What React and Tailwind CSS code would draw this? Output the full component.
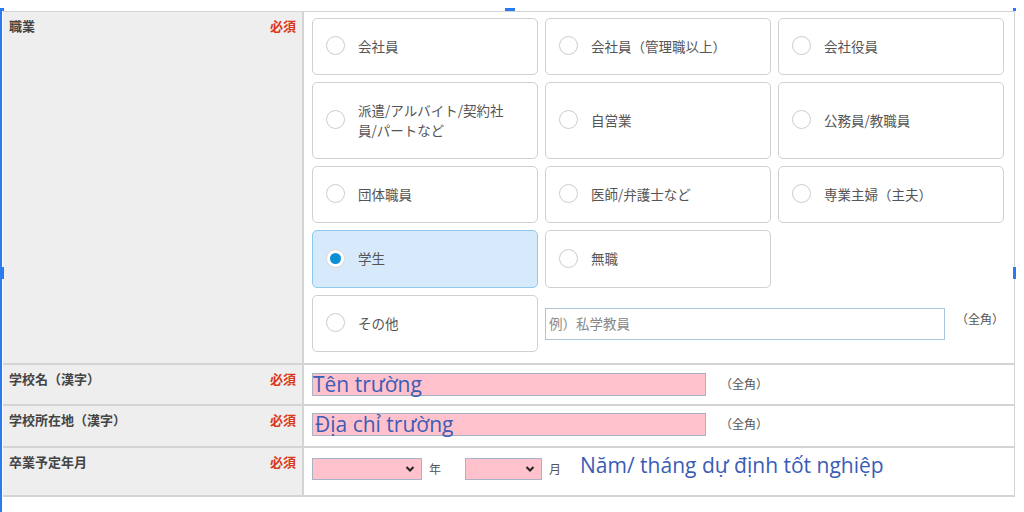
import React from "react";

const JP = { fontFamily: '"Noto Sans CJK JP", "Noto Sans", sans-serif' };
const VI = { fontFamily: '"Open Sans", "Noto Sans", sans-serif' };

function Radio({ checked }) {
  return (
    <span
      className={
        "flex h-[19px] w-[19px] shrink-0 items-center justify-center rounded-full border-[1.5px] bg-white " +
        (checked ? "border-[#d8d8d8]" : "border-[#cccccc]")
      }
    >
      {checked && <span className="h-[11px] w-[11px] rounded-full bg-[#0b8fd6]" />}
    </span>
  );
}

function Card({ label, h, checked }) {
  return (
    <div
      className={
        "flex items-center gap-[13px] rounded-[5px] border-[1.5px] pb-[2px] pl-[13px] pr-[10px] " +
        (checked ? "border-[#8fcaed] bg-[#d6eafc]" : "border-[#d0d0d0] bg-white")
      }
      style={{ height: h }}
    >
      <Radio checked={checked} />
      <span className="text-[13.5px] leading-[20px] text-[#555]" style={JP}>
        {label}
      </span>
    </div>
  );
}

function Chevron() {
  return (
    <svg width="10" height="8" viewBox="0 0 10 8" className="shrink-0">
      <path d="M1.5 2 L5 5.5 L8.5 2" fill="none" stroke="#222" strokeWidth="2" />
    </svg>
  );
}

function Select({ w }) {
  return (
    <div
      className="flex h-[22px] items-center justify-end border border-[#a9b3c6] bg-[#ffc2cc] pr-[6px]"
      style={{ width: w }}
    >
      <Chevron />
    </div>
  );
}

function LabelCell({ text, pt }) {
  return (
    <div
      className="flex justify-between border-r-2 border-[#d4d4d4] bg-[#eeeeee] pl-[6px] pr-[6px]"
      style={{ paddingTop: pt }}
    >
      <span className="text-[13px] font-bold leading-[18px] text-[#444]" style={JP}>
        {text}
      </span>
      <span className="text-[13px] font-bold leading-[18px] text-[#d8381c]" style={JP}>
        必須
      </span>
    </div>
  );
}

export default function App() {
  const h1 = 57;
  return (
    <div className="relative h-[512px] w-[1024px] overflow-hidden bg-white">
      {/* editor selection overlays */}
      <div className="absolute left-0 top-[9px] h-[503px] w-[2px] bg-[#2b7bf0]" />
      <div className="absolute left-0 top-[8px] h-[3px] w-[4px] bg-[#2b7bf0]" />
      <div className="absolute left-0 top-[267px] h-[12px] w-[4px] bg-[#2b7bf0]" />
      <div className="absolute left-[1013px] top-[267px] h-[12px] w-[3px] bg-[#2b7bf0]" />
      <div className="absolute left-[505px] top-[8px] h-[3px] w-[10px] bg-[#2b7bf0]" />
      <div className="absolute left-[1013px] top-[8px] h-[3px] w-[3px] bg-[#2b7bf0]" />

      <div className="ml-[3px] mt-[11px] w-[1012px] border-r border-t border-b-2 border-[#d4d4d4]">
        {/* Row 1 */}
        <div className="grid grid-cols-[301px_1fr] border-b-2 border-[#d4d4d4]">
          <LabelCell text="職業" pt={5} />
          <div className="pb-[11px] pl-[8px] pt-[6px]">
            <div className="grid grid-cols-[226px_226px_226px] gap-[7px]">
              <Card label="会社員" h={h1} />
              <Card label="会社員（管理職以上）" h={h1} />
              <Card label="会社役員" h={h1} />
              <Card
                label={
                  <>
                    派遣/アルバイト/契約社
                    <br />
                    員/パートなど
                  </>
                }
                h={77}
              />
              <Card label="自営業" h={77} />
              <Card label="公務員/教職員" h={77} />
              <Card label="団体職員" h={h1} />
              <Card label="医師/弁護士など" h={h1} />
              <Card label="専業主婦（主夫）" h={h1} />
              <Card label="学生" h={58} checked />
              <Card label="無職" h={58} />
              <div />
              <Card label="その他" h={h1} />
              <div className="col-span-2 flex items-center">
                <div className="flex h-[32px] w-[401px] items-center border border-[#a9c6dc] bg-white pl-[3px]">
                  <span className="text-[13.5px] text-[#888]" style={JP}>
                    例）私学教員
                  </span>
                </div>
                <span className="ml-[11px] -mt-[9px] text-[12px] text-[#555]" style={JP}>
                  （全角）
                </span>
              </div>
            </div>
          </div>
        </div>

        {/* Row 2 */}
        <div className="grid h-[41px] grid-cols-[301px_1fr] border-b-2 border-[#d4d4d4]">
          <LabelCell text="学校名（漢字）" pt={5} />
          <div className="flex items-start pl-[8px] pt-[8px]">
            <div className="flex h-[23px] w-[394px] items-center border border-[#a9b3c6] bg-[#ffc2cc]">
              <span className="whitespace-nowrap text-[21px] leading-[23px] text-[#3a5db6]" style={VI}>
                Tên trường
              </span>
            </div>
            <span className="ml-[14px] mt-[2px] text-[12px] text-[#555]" style={JP}>
              （全角）
            </span>
          </div>
        </div>

        {/* Row 3 */}
        <div className="grid h-[42px] grid-cols-[301px_1fr] border-b-2 border-[#d4d4d4]">
          <LabelCell text="学校所在地（漢字）" pt={5} />
          <div className="flex items-start pl-[8px] pt-[7px]">
            <div className="flex h-[23px] w-[394px] items-center border border-[#a9b3c6] bg-[#ffc2cc] pl-[2px]">
              <span className="whitespace-nowrap text-[21px] leading-[23px] text-[#3a5db6]" style={VI}>
                Địa chỉ trường
              </span>
            </div>
            <span className="ml-[14px] mt-[2px] text-[12px] text-[#555]" style={JP}>
              （全角）
            </span>
          </div>
        </div>

        {/* Row 4 */}
        <div className="grid h-[47px] grid-cols-[301px_1fr]">
          <LabelCell text="卒業予定年月" pt={5} />
          <div className="flex items-start pl-[8px] pt-[10px]">
            <Select w={110} />
            <span className="ml-[7px] mt-[2px] text-[12px] text-[#555]" style={JP}>
              年
            </span>
            <div className="ml-[24px]">
              <Select w={77} />
            </div>
            <span className="ml-[7px] mt-[2px] text-[12px] text-[#555]" style={JP}>
              月
            </span>
            <span className="ml-[19px] -mt-[7px] whitespace-nowrap text-[21px] leading-[28px] text-[#3a5db6]" style={VI}>
              Năm/ tháng dự định tốt nghiệp
            </span>
          </div>
        </div>
      </div>
    </div>
  );
}
